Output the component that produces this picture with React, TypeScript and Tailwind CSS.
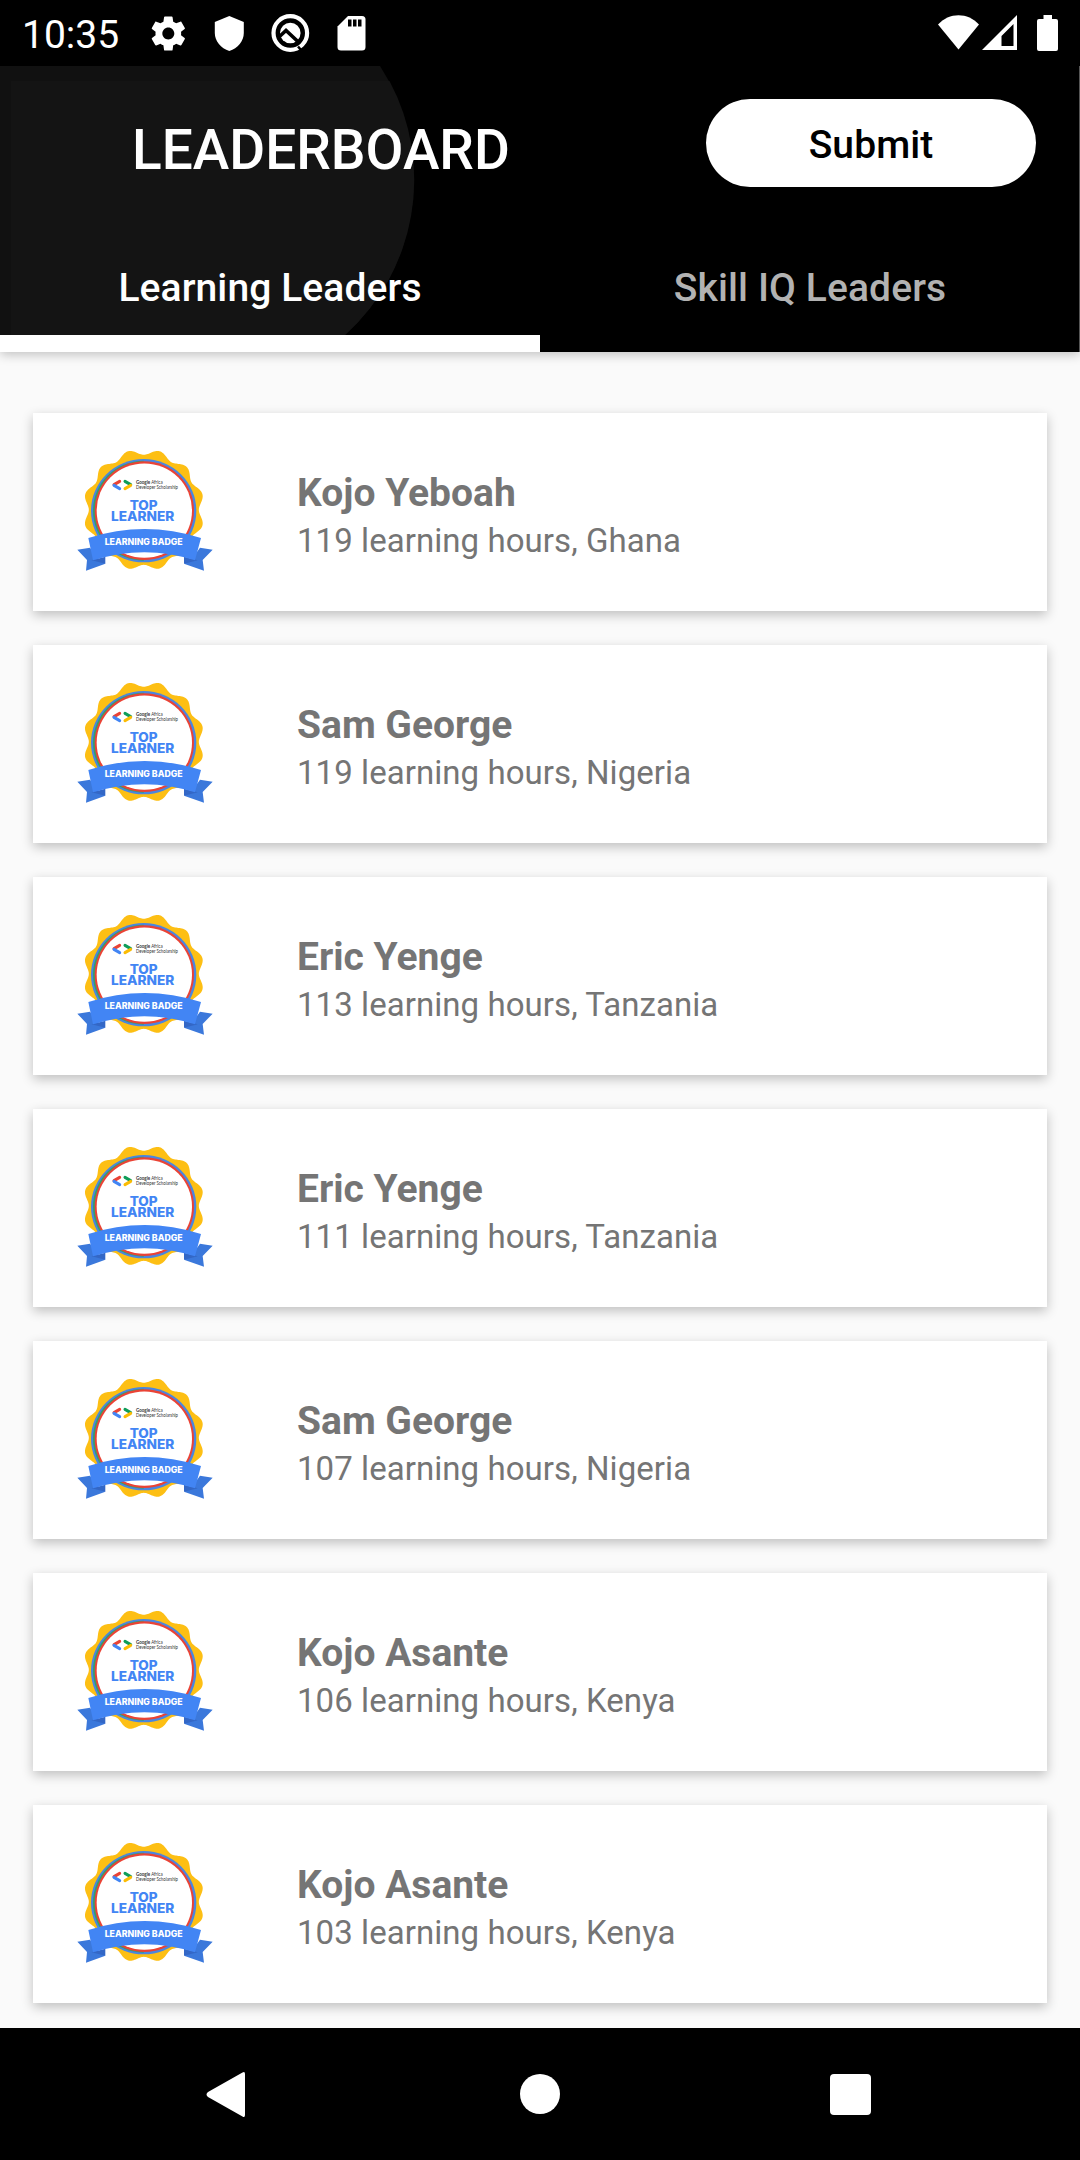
import React from "react";

const leaders = [
  { name: "Kojo Yeboah", hours: 119, country: "Ghana" },
  { name: "Sam George", hours: 119, country: "Nigeria" },
  { name: "Eric Yenge", hours: 113, country: "Tanzania" },
  { name: "Eric Yenge", hours: 111, country: "Tanzania" },
  { name: "Sam George", hours: 107, country: "Nigeria" },
  { name: "Kojo Asante", hours: 106, country: "Kenya" },
  { name: "Kojo Asante", hours: 103, country: "Kenya" },
];

/** Scalloped rosette outline with rounded lobes. */
function rosette(cx: number, cy: number, r: number, amp: number, lobes: number) {
  const pts: string[] = [];
  const steps = 360;
  for (let i = 0; i < steps; i++) {
    const a = (i / steps) * Math.PI * 2;
    const rr = r - amp * Math.cos(lobes * a);
    pts.push(`${(cx + rr * Math.cos(a)).toFixed(2)},${(cy + rr * Math.sin(a)).toFixed(2)}`);
  }
  return pts.join(" ");
}

const ROSETTE = rosette(251.5, 224.5, 173.5, 8.5, 12);

function Badge() {
  return (
    <svg viewBox="0 0 510 450" className="mb-[4px] h-[150px] w-[170px] shrink-0">
      <polygon points={ROSETTE} fill="#fdbf14" />
      <ellipse cx="251" cy="227" rx="158" ry="155" fill="#4a86e0" />
      <path d="M251 77a152 150 0 0 0 0 300z" fill="#34a06a" />
      <ellipse cx="253" cy="227" rx="149" ry="148" fill="#ea4335" />
      <ellipse cx="253" cy="227" rx="143" ry="141.500" fill="#fff" />
      <path d="M179 139l-17 10" stroke="#ea4335" strokeWidth="9" strokeLinecap="round" />
      <path d="M162 151l17 10" stroke="#4285f4" strokeWidth="9" strokeLinecap="round" />
      <path d="M195 139l17 10" stroke="#0f9d58" strokeWidth="9" strokeLinecap="round" />
      <path d="M212 151l-17 10" stroke="#fbbc04" strokeWidth="9" strokeLinecap="round" />
      <g fontFamily="Lato, sans-serif" fill="#333">
        <text x="228" y="146" fontSize="14" textLength="80" lengthAdjust="spacingAndGlyphs"><tspan fontWeight="700">Google</tspan> Africa</text>
        <text x="228" y="161" fontSize="14" textLength="126" lengthAdjust="spacingAndGlyphs">Developer Scholarship</text>
      </g>
      <path d="M52 344l38-6l20 28l26 20l-58 21l3-32z" fill="#3b78db" />
      <path d="M458 344l-38-6l-20 28l-28 20l60 21l-4-32z" fill="#3b78db" />
      <path d="M95 376l41-11v21z" fill="#3367c6" />
      <path d="M413 376l-41-11v21z" fill="#3367c6" />
      <path d="M85 309q169-54 338 0l-18 67q-151-49-306 0z" fill="#4285f4" />
      <g fontFamily="Inter, sans-serif" fontWeight="800" textAnchor="middle">
        <text x="251" y="224" fontSize="38.500" fill="#4285f4" textLength="84" lengthAdjust="spacingAndGlyphs">TOP</text>
        <text x="248" y="259" fontSize="38" fill="#4285f4" textLength="190" lengthAdjust="spacingAndGlyphs">LEARNER</text>
        <text x="251" y="330" fontSize="25.500" fill="#fff" textLength="234" lengthAdjust="spacingAndGlyphs">LEARNING BADGE</text>
      </g>
    </svg>
  );
}

function StatusBar() {
  return (
    <div className="flex h-[66px] shrink-0 items-center bg-black text-white">
      <span className="ml-[22px] w-[128px] pt-[4px] text-[39px] leading-none">10:35</span>
      <svg viewBox="0 0 400 70" className="-ml-[150px] h-[70px] w-[400px] self-start" fill="#fff">
        <g transform="translate(147.8 13) scale(1.71)">
          <path d="M19.43 12.98c.04-.32.07-.64.07-.98s-.03-.66-.07-.98l2.11-1.65c.19-.15.24-.42.12-.64l-2-3.46c-.12-.22-.39-.3-.61-.22l-2.49 1c-.52-.4-1.08-.73-1.69-.98l-.38-2.65C14.46 2.18 14.25 2 14 2h-4c-.25 0-.46.18-.49.42l-.38 2.65c-.61.25-1.17.59-1.69.98l-2.49-1c-.23-.09-.49 0-.61.22l-2 3.46c-.13.22-.07.49.12.64l2.11 1.65c-.04.32-.07.65-.07.98s.03.66.07.98l-2.11 1.65c-.19.15-.24.42-.12.64l2 3.46c.12.22.39.3.61.22l2.49-1c.52.4 1.08.73 1.69.98l.38 2.65c.03.24.24.42.49.42h4c.25 0 .46-.18.49-.42l.38-2.65c.61-.25 1.17-.59 1.69-.98l2.49 1c.23.09.49 0 .61-.22l2-3.46c.12-.22.07-.49-.12-.64l-2.11-1.65zM12 15.5c-1.93 0-3.5-1.57-3.5-3.5s1.57-3.5 3.5-3.5 3.5 1.57 3.5 3.5-1.57 3.5-3.5 3.5z" />
        </g>
        <path d="M229.300 16l14.500 6v11c0 8-6 15.500-14.500 18c-8.500-2.500-14.500-10-14.500-18V22z" />
        <circle cx="290.300" cy="33" r="16.800" fill="none" stroke="#fff" strokeWidth="4.200" />
        <circle cx="290.300" cy="33" r="10.300" />
        <path d="M279 37l7-6.500L300 43.500" fill="none" stroke="#000" strokeWidth="3.600" />
        <path d="M298 46.500l3.500 4" stroke="#000" strokeWidth="2.500" />
        <path d="M348 16h14a3.500 3.500 0 0 1 3.500 3.500V47a3.500 3.500 0 0 1-3.500 3.500h-21a3.500 3.500 0 0 1-3.500-3.500V26.500z" />
        <path d="M348 19.500h3.500v7H348zM353 19.500h3.500v7H353zM358 19.500h3.500v7H358z" fill="#000" />
      </svg>
      <svg viewBox="0 0 180 70" className="ml-auto h-[70px] w-[180px] self-start" fill="#fff">
        <path d="M58.500 49.500L38 24.500c11-12.500 30-12.500 41 0z" />
        <path fillRule="evenodd" d="M117 15v35H82zM113.500 24L101.500 36v10h12z" />
        <path d="M143.500 15h8.500v4h4a2 2 0 0 1 2 2v28a2 2 0 0 1-2 2h-17a2 2 0 0 1-2-2V21a2 2 0 0 1 2-2h4.500z" />
      </svg>
    </div>
  );
}

function Header() {
  return (
    <header className="relative z-10 flex h-[286px] shrink-0 flex-col bg-black text-white shadow-[0_3px_10px_rgba(0,0,0,0.22)]">
      <svg viewBox="0 66 1080 286" className="absolute inset-0 h-full w-full">
        <path d="M0 66H380A209 209 0 0 1 345 335L328 352H0z" fill="#111" />
        <path d="M11 81H389.500A209 209 0 0 1 345 335L328 352H11z" fill="#141414" />
        <path d="M1079.500 66V352" stroke="#555" />
      </svg>
      <div className="relative flex h-[154px] items-center justify-between pr-[44px] pl-[132px]">
        <h1 className="pt-[15px] text-[55px] leading-none font-medium">LEADERBOARD</h1>
        <button className="h-[88px] w-[330px] rounded-full bg-white pt-[4px] text-[39px] leading-none font-medium tracking-[0.1px] text-black">Submit</button>
      </div>
      <nav className="relative grid flex-1 grid-cols-2 text-[39px] leading-none font-medium tracking-[0.1px]">
        <div className="flex justify-center border-b-[17px] border-white pt-[49px]">Learning Leaders</div>
        <div className="flex justify-center pt-[49px] text-[#b2b2b2]">Skill IQ Leaders</div>
      </nav>
    </header>
  );
}

export default function App() {
  return (
    <div className="flex h-[2160px] w-[1080px] flex-col overflow-hidden bg-[#fafafa] font-['Roboto',sans-serif]">
      <StatusBar />
      <Header />
      <main className="flex h-[1676px] shrink-0 flex-col gap-[34px] overflow-hidden px-[33px] pt-[61px]">
        {leaders.map((l, i) => (
          <article key={i} className="flex h-[198px] shrink-0 items-center bg-white pl-[27px] text-[#757575] shadow-[0_4px_11px_rgba(0,0,0,0.24)]">
            <Badge />
            <div className="ml-[67px] pt-[11px]">
              <h2 className="text-[39px] leading-[46px] font-bold">{l.name}</h2>
              <p className="text-[33px] leading-[50px] tracking-[0.06px]">{l.hours} learning hours, {l.country}</p>
            </div>
          </article>
        ))}
      </main>
      <footer className="h-[132px] shrink-0 bg-black">
        <svg viewBox="0 0 1080 132" className="h-full w-full" fill="#fff">
          <path d="M242.500 44.500q2.500-1.500 2.500 1.500V87q0 3-2.500 1.500L208 69q-3-2.500 0-5z" />
          <circle cx="540" cy="66" r="20" />
          <rect x="830" y="46" width="41" height="41" rx="4" />
        </svg>
      </footer>
    </div>
  );
}
